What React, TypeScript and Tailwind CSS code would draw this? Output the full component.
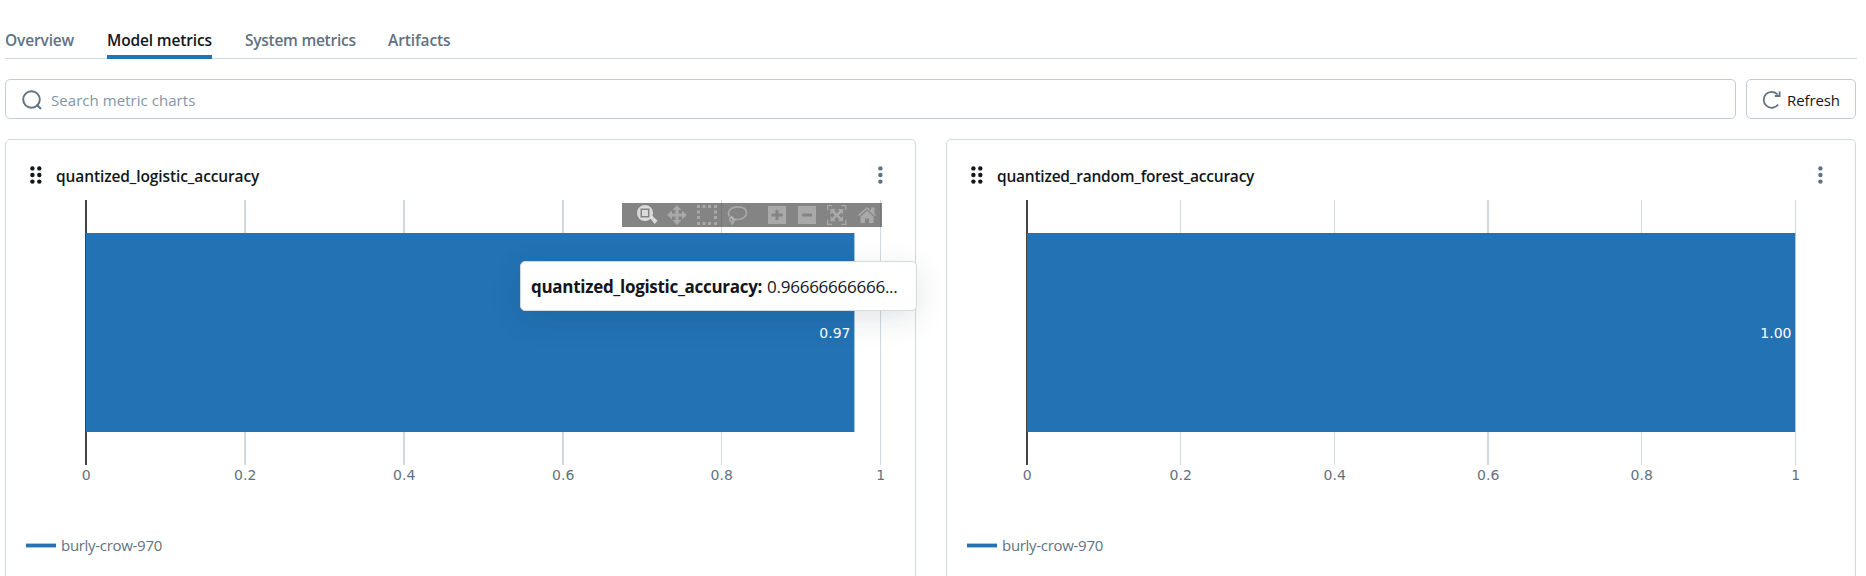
import React from "react";

type Grid = { x: number; w: number; label: string };

const gridA: Grid[] = [
  { x: 244, w: 2, label: "0.2" },
  { x: 403, w: 2, label: "0.4" },
  { x: 562, w: 2, label: "0.6" },
  { x: 721, w: 1, label: "0.8" },
  { x: 880, w: 1, label: "1" },
];
const gridB: Grid[] = [
  { x: 1180, w: 1, label: "0.2" },
  { x: 1334, w: 1, label: "0.4" },
  { x: 1487, w: 2, label: "0.6" },
  { x: 1641, w: 1, label: "0.8" },
  { x: 1795, w: 1, label: "1" },
];

function Dots({ cols, color, className }: { cols: number; color: string; className: string }) {
  return (
    <svg className={className} width={cols === 2 ? 12 : 5} height="18" viewBox={cols === 2 ? "0 0 12 18" : "0 0 5 18"} fill={color}>
      {[2.4, 9, 15.6].map((y) => (
        <React.Fragment key={y}>
          <circle cx="2.4" cy={y} r="2.2" />
          {cols === 2 && <circle cx="9.3" cy={y} r="2.2" />}
        </React.Fragment>
      ))}
    </svg>
  );
}

function ModeBar() {
  return (
    <svg className="absolute left-[616px] top-[63px]" width="260" height="24" viewBox="0 0 260 24">
      <rect width="260" height="24" fill="#444" fillOpacity="0.66" />
      <g fill="#fff" fillOpacity="0.7">
        <path fillRule="evenodd" d="M23 2a8 8 0 1 1 0 16a8 8 0 0 1 0-16zM18.5 5.5v9h9v-9z" />
        <path d="M20 7h6v6h-6z" />
        <path d="M28 15l2.3-2.3 5.2 5-2.8 3.4z" />
      </g>
      <g fill="#fff" fillOpacity="0.3">
        <path d="M55 2l4.500 5h-3v3.500h3.500v-3l4.800 4.500-4.800 4.500v-3h-3.500v3.500h3L55 22l-4.500-5h3v-3.500H50v3L45.200 12 50 7.500v3h3.500V7h-3z" />
        <path d="M75 2h3v3h-3zM80.500 2h3v3h-3zM86 2h3v3h-3zM92 2h3v3h-3zM75 7.500h3v3h-3zM92 7.500h3v3h-3zM75 13h3v3h-3zM92 13h3v3h-3zM75 19h3v3h-3zM80.500 19h3v3h-3zM86 19h3v3h-3zM92 19h3v3h-3z" />
        <path fillRule="evenodd" d="M146 3h18v18h-18zM153.500 7v3.500h-4v3h4V17h3v-3.500h4v-3h-4V7z" />
        <path fillRule="evenodd" d="M176 3h18v18h-18zM180 10.500v3h10v-3z" />
        <path d="M205 2h5v1.300h-3.700V7H205zM219.500 2h5v5h-1.300V3.300h-3.700zM205 17h1.300v3.700h3.700V22h-5zM223.200 17h1.300v5h-5v-1.300h3.700z" />
        <path d="M208.500 6h5.500l-1.800 1.800 2.600 2.600 2.600-2.600L215.600 6h5.500v5.500l-1.800-1.800-2.500 2.500 2.500 2.500 1.800-1.800v5.300h-5.500l1.800-1.800-2.600-2.600-2.600 2.600 1.800 1.800h-5.500v-5.300l1.800 1.800 2.500-2.500-2.500-2.500-1.800 1.800z" />
        <path d="M236 12l9-8 4 3.500V4.500h3.500v6.200L254 12l-1 1.200-8-7.200-8 7.200zM238.500 13.500l6.500-5.700 6.500 5.700V20H247v-4.500h-4V20h-4.500z" />
      </g>
      <g fill="none" stroke="#fff" strokeOpacity="0.3" strokeWidth="1.700">
        <path d="M107.500 13.500c-3-5 1.500-9.700 8-9.700s9 3 9 6.200-3.500 6.500-9 6.500c-3 0-5.500-1-6.500-2.500" />
        <path d="M111.500 14.500a2.400 2.400 0 1 0 1 2.500M110 16.500c2.500 0 2 3-.5 5" />
      </g>
    </svg>
  );
}

interface CardProps {
  title: string;
  titleClass: string;
  origin: number;
  axis: number;
  end: number;
  grid: Grid[];
  value: string;
  over?: React.ReactNode;
}

function ChartCard({ title, titleClass, origin, axis, end, grid, value, over }: CardProps) {
  return (
    <section className="relative h-[460px] rounded-[5px] border border-[#d1d9e1] bg-white">
      <header className="flex h-[60px] items-start pl-6 pr-8 pt-[26px]">
        <Dots cols={2} color="#11171c" className="shrink-0" />
        <h2 className={"ml-[14px] -mt-[2px] whitespace-nowrap text-[15.5px] leading-[24px] font-semibold text-[#11171c] " + titleClass}>{title}</h2>
        <Dots cols={1} color="#5f7281" className="ml-auto shrink-0" />
      </header>
      <svg className="block" width="908" height="290" viewBox={`${origin} 200 908 290`}>
        {grid.map((g) => (
          <rect key={g.label} x={g.x} y="200" width={g.w} height="265" fill="#d1d9e1" />
        ))}
        <rect x={axis} y="200" width="2" height="265" fill="#444" />
        <rect x={axis + 1} y="233" width={end - axis - 1} height="199" fill="#2272b4" />
        <rect x={end} y="233" width="1" height="199" fill="#a7c7e1" />
        <g fontFamily="DejaVu Sans, sans-serif" fontSize="14">
          <text x={end - 3.5} y="338" textAnchor="end" fill="#fff">{value}</text>
          <g fill="#5f7281" textAnchor="middle">
            <text x={axis + 1.3} y="480">0</text>
            {grid.map((g) => (
              <text key={g.label} x={g.x + g.w / 2 + 0.2} y="480">{g.label}</text>
            ))}
          </g>
        </g>
      </svg>
      <footer className="flex items-center gap-[5px] pl-5 pt-[43px]">
        <i className="h-[5px] w-[30px] border-y border-[#a7c7e1] bg-[#2272b4]" />
        <span className="text-[15px] leading-[24px] tracking-[-0.3px] text-[#5f7281]">burly-crow-970</span>
      </footer>
      {over}
    </section>
  );
}

export default function App() {
  return (
    <main className="h-[576px] overflow-hidden bg-white pl-[5px] pr-[9px] pt-[22px] font-['Open_Sans',sans-serif]">
      <nav className="flex h-[37px] gap-[33px] border-b border-[#d1d9e1] text-[15.5px] leading-[37px] font-semibold text-[#5f7281]">
        <span className="w-[69px] whitespace-nowrap tracking-[-0.15px]">Overview</span>
        <span className="h-[37px] w-[105px] whitespace-nowrap border-b-4 border-[#2272b4] tracking-[-0.15px] text-[#11171c]">Model metrics</span>
        <span className="w-[110px] whitespace-nowrap tracking-[-0.26px]">System metrics</span>
        <span className="whitespace-nowrap tracking-[-0.1px]">Artifacts</span>
      </nav>
      <div className="mr-px mt-5 flex gap-[10px]">
        <div className="flex h-10 flex-1 items-center rounded-[5px] border border-[#c0cdd8] pl-4 text-[15px] text-[#8396a5]">
          <svg className="mt-px" width="20" height="20" viewBox="0 0 20 20" fill="none" stroke="#5f7281" strokeWidth="1.9">
            <circle cx="9.5" cy="9.5" r="8.3" />
            <path d="M14.500 14.500l4.500 4.500" />
          </svg>
          <span className="ml-[9px] mt-[2px] tracking-[0.05px]">Search metric charts</span>
        </div>
        <button className="flex h-10 w-[110px] items-center rounded-[5px] border border-[#c0cdd8] pl-[15px] text-[15px] text-[#11171c]">
          <svg width="19" height="19" viewBox="0 0 19 19" fill="none" stroke="#5f7281" strokeWidth="1.8">
            <path d="M16.200 14.500A8 8 0 1 1 15.700 4.500M17.600 1.500V6h-4.800" />
          </svg>
          <span className="ml-[6px] mt-[2px] tracking-[-0.1px]">Refresh</span>
        </button>
      </div>
      <div className="mt-5 grid grid-cols-[911px_910px] gap-[30px]">
        <ChartCard
          title="quantized_logistic_accuracy"
          titleClass="tracking-[-0.11px]"
          origin={6}
          axis={85}
          end={854}
          grid={gridA}
          value="0.97"
          over={
            <>
              <ModeBar />
              <div className="absolute left-[514px] top-[121px] flex h-[50px] w-[397px] items-center rounded-[5px] border border-[#d1d9e1] bg-white pl-[10px] pt-[2px] text-[17px] whitespace-nowrap text-[#11171c] shadow-[0_8px_30px_rgba(27,49,57,0.13)]">
                <b className="tracking-[-0.3px]">quantized_logistic_accuracy:</b>
                <span className="ml-[5px] tracking-[-0.25px]">0.96666666666...</span>
              </div>
            </>
          }
        />
        <ChartCard title="quantized_random_forest_accuracy" titleClass="tracking-[-0.22px]" origin={947} axis={1026} end={1795} grid={gridB} value="1.00" />
      </div>
    </main>
  );
}
